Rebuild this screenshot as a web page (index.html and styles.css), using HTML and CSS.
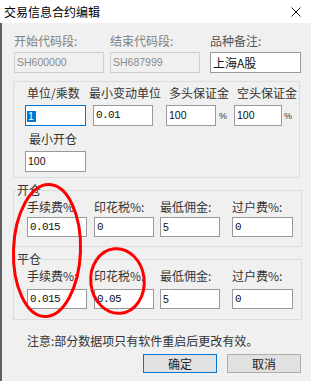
FILE: index.html
```html
<!DOCTYPE html>
<html lang="zh-CN">
<head>
    <meta charset="UTF-8">
    <title>交易信息合约编辑</title>
    <link rel="stylesheet" href="styles.css">
</head>
<body>
    <div class="window">
        <div class="titlebar">
            <span class="title">交易信息合约编辑</span>
            <svg class="close" width="10" height="10" viewBox="0 0 10 10">
                <path d="M0.5 0.5 L9.5 9.5 M9.5 0.5 L0.5 9.5" stroke="#111" stroke-width="1" fill="none"/>
            </svg>
        </div>

        <div class="main">
            <!-- code range -->
            <div class="code-row">
                <div class="cell">
                    <div class="lbl off">开始代码段:</div>
                    <div class="box tall disabled">SH600000</div>
                </div>
                <div class="cell">
                    <div class="lbl off">结束代码段:</div>
                    <div class="box tall disabled">SH687999</div>
                </div>
                <div class="cell">
                    <div class="lbl note-lbl">品种备注:</div>
                    <div class="box tall cjk">上海A股</div>
                </div>
            </div>

            <!-- contract params -->
            <div class="group">
                <div class="param-grid">
                    <div class="cell c1">
                        <div class="lbl">单位/乘数</div>
                        <div class="box tall focus w61"><span class="sel">1</span></div>
                    </div>
                    <div class="cell c2">
                        <div class="lbl">最小变动单位</div>
                        <div class="box tall mono w60">0.01</div>
                    </div>
                    <div class="cell c3">
                        <div class="lbl">多头保证金</div>
                        <div class="with-unit">
                            <div class="box tall w50">100</div>
                            <span class="unit">%</span>
                        </div>
                    </div>
                    <div class="cell c4">
                        <div class="lbl">空头保证金</div>
                        <div class="with-unit">
                            <div class="box tall w48">100</div>
                            <span class="unit">%</span>
                        </div>
                    </div>
                    <div class="cell c5">
                        <div class="lbl">最小开仓</div>
                        <div class="box tall w61">100</div>
                    </div>
                </div>
            </div>

            <!-- open fees -->
            <fieldset class="fees fees-open">
                <legend>开仓</legend>
                <div class="fee-grid">
                    <div class="cell">
                        <div class="lbl">手续费%</div>
                        <div class="box mono">0.015</div>
                    </div>
                    <div class="cell">
                        <div class="lbl">印花税%:</div>
                        <div class="box mono">0</div>
                    </div>
                    <div class="cell">
                        <div class="lbl">最低佣金:</div>
                        <div class="box">5</div>
                    </div>
                    <div class="cell">
                        <div class="lbl">过户费%:</div>
                        <div class="box mono w61">0</div>
                    </div>
                </div>
            </fieldset>

            <!-- close fees -->
            <fieldset class="fees fees-close">
                <legend>平仓</legend>
                <div class="fee-grid">
                    <div class="cell">
                        <div class="lbl">手续费%:</div>
                        <div class="box mono">0.015</div>
                    </div>
                    <div class="cell">
                        <div class="lbl">印花税%:</div>
                        <div class="box mono">0.05</div>
                    </div>
                    <div class="cell">
                        <div class="lbl">最低佣金:</div>
                        <div class="box">5</div>
                    </div>
                    <div class="cell">
                        <div class="lbl">过户费%:</div>
                        <div class="box mono w61">0</div>
                    </div>
                </div>
            </fieldset>

            <p class="notice">注意:部分数据项只有软件重启后更改有效。</p>

            <div class="buttons">
                <button class="btn default">确定</button>
                <button class="btn">取消</button>
            </div>
        </div>

        <!-- red marks drawn over the dialog -->
        <svg class="marks" width="311" height="381" viewBox="0 0 311 381">
            <ellipse cx="47" cy="250.5" rx="33.5" ry="66" transform="rotate(2 47 250.5)" fill="none" stroke="#f00" stroke-width="3"/>
            <ellipse cx="117.5" cy="281" rx="26.7" ry="32.4" transform="rotate(-6 117.5 281)" fill="none" stroke="#f00" stroke-width="3"/>
        </svg>
    </div>
</body>
</html>
```

FILE: styles.css
```css
body {
    margin: 0;
    background: #f0f0f0;
    font-family: "Noto Sans CJK SC", "Noto Sans", sans-serif;
    font-size: 12px;
    color: #333;
}
.window {
    position: relative;
    width: 311px;
    height: 381px;
    overflow: hidden;
}
.titlebar {
    height: 23px;
    background: #fff;
    display: flex;
    align-items: center;
    justify-content: space-between;
    padding: 1px 10px 0 4px;
    box-sizing: border-box;
}
.title {
    font-size: 12px;
    line-height: 16px;
    color: #000;
}
.main {
    height: 358px;
    box-sizing: border-box;
    border-left: 2px solid #5f5f5f;
    padding: 10px 10px 0 11px;
}
.cell {
    display: flex;
    flex-direction: column;
}
.lbl {
    line-height: 16px;
    white-space: nowrap;
}
.lbl.off {
    color: #808080;
}
.lbl.note-lbl {
    color: #555;
}
.box {
    box-sizing: border-box;
    width: 60px;
    height: 20px;
    line-height: 18px;
    padding: 0 2px;
    border: 1px solid #9a9a9a;
    background: #fff;
    color: #111;
    font-family: "Liberation Sans", Arial, sans-serif;
    font-size: 10.5px;
    white-space: nowrap;
    overflow: hidden;
}
.box.tall {
    height: 21px;
    line-height: 19px;
}
.box.mono {
    font-family: "Liberation Mono", monospace;
    font-size: 11px;
    letter-spacing: -0.6px;
}
.box.cjk {
    font-family: "Noto Sans CJK SC", sans-serif;
    font-size: 12px;
}
.box.disabled {
    background: #f0f0f0;
    border-color: #cfcfcf;
    color: #8a8a8a;
}
.box.focus {
    border-color: #0078d7;
    padding-left: 1px;
}
.sel {
    display: inline-block;
    background: #0078d7;
    color: #fff;
    line-height: 11px;
    padding: 0 2px 0 1px;
    vertical-align: middle;
}
.w61 { width: 61px; }
.w60 { width: 60px; }
.w50 { width: 50px; }
.w48 { width: 48px; }

/* top row */
.code-row {
    display: grid;
    grid-template-columns: 96px 100px 91px;
    padding-left: 1px;
}
.code-row .lbl {
    margin-bottom: 3px;
}
.code-row .box {
    width: 90px;
}
.code-row .cell:last-child .box {
    width: 91px;
}

/* params group */
.group {
    width: 287px;
    box-sizing: border-box;
    margin-top: 8px;
    border: 1px solid #dcdcdc;
    padding: 3px 0 5px 11px;
}
.param-grid {
    display: grid;
    grid-template-columns: 68px 73px 68px auto;
    row-gap: 5px;
}
.param-grid .lbl {
    margin-bottom: 4px;
}
.c1 .lbl { padding-left: 2px; }
.c2 .lbl { margin-left: -4px; }
.c3 .lbl, .c4 .lbl { padding-left: 3px; }
.c5 .lbl { padding-left: 4px; }
.with-unit {
    display: flex;
    align-items: center;
}
.unit {
    font-family: "Liberation Sans", Arial, sans-serif;
    font-size: 9px;
    color: #333;
    margin-left: 3px;
}
.c4 .unit {
    margin-left: 2px;
}

/* fee groups */
.fees {
    width: 289px;
    box-sizing: border-box;
    margin: 5px 0 0;
    border: 1px solid #dcdcdc;
    padding: 2px 0 9px 2px;
    min-width: 0;
}
.fees legend {
    padding: 0 1px;
    line-height: 14px;
}
.fee-grid {
    display: grid;
    grid-template-columns: 67px 66px 72px auto;
    margin-left: 11px;
}
.fee-grid .lbl {
    margin-bottom: 2px;
}
.fees-close {
    padding-bottom: 10px;
}
.fees-close .fee-grid .lbl {
    margin-bottom: 5px;
}

.notice {
    margin: 13px 0 0;
    padding-left: 14px;
    line-height: 16px;
}
.buttons {
    display: flex;
    justify-content: flex-end;
    gap: 10px;
    margin-top: 5px;
}
.btn {
    width: 74px;
    height: 19px;
    padding: 0;
    border: 1px solid #adadad;
    background: #e1e1e1;
    font-family: "Noto Sans CJK SC", sans-serif;
    font-size: 12px;
    line-height: 17px;
    color: #222;
}
.btn.default {
    border-color: #0078d7;
}

.marks {
    position: absolute;
    top: 0;
    left: 0;
    pointer-events: none;
}
```
